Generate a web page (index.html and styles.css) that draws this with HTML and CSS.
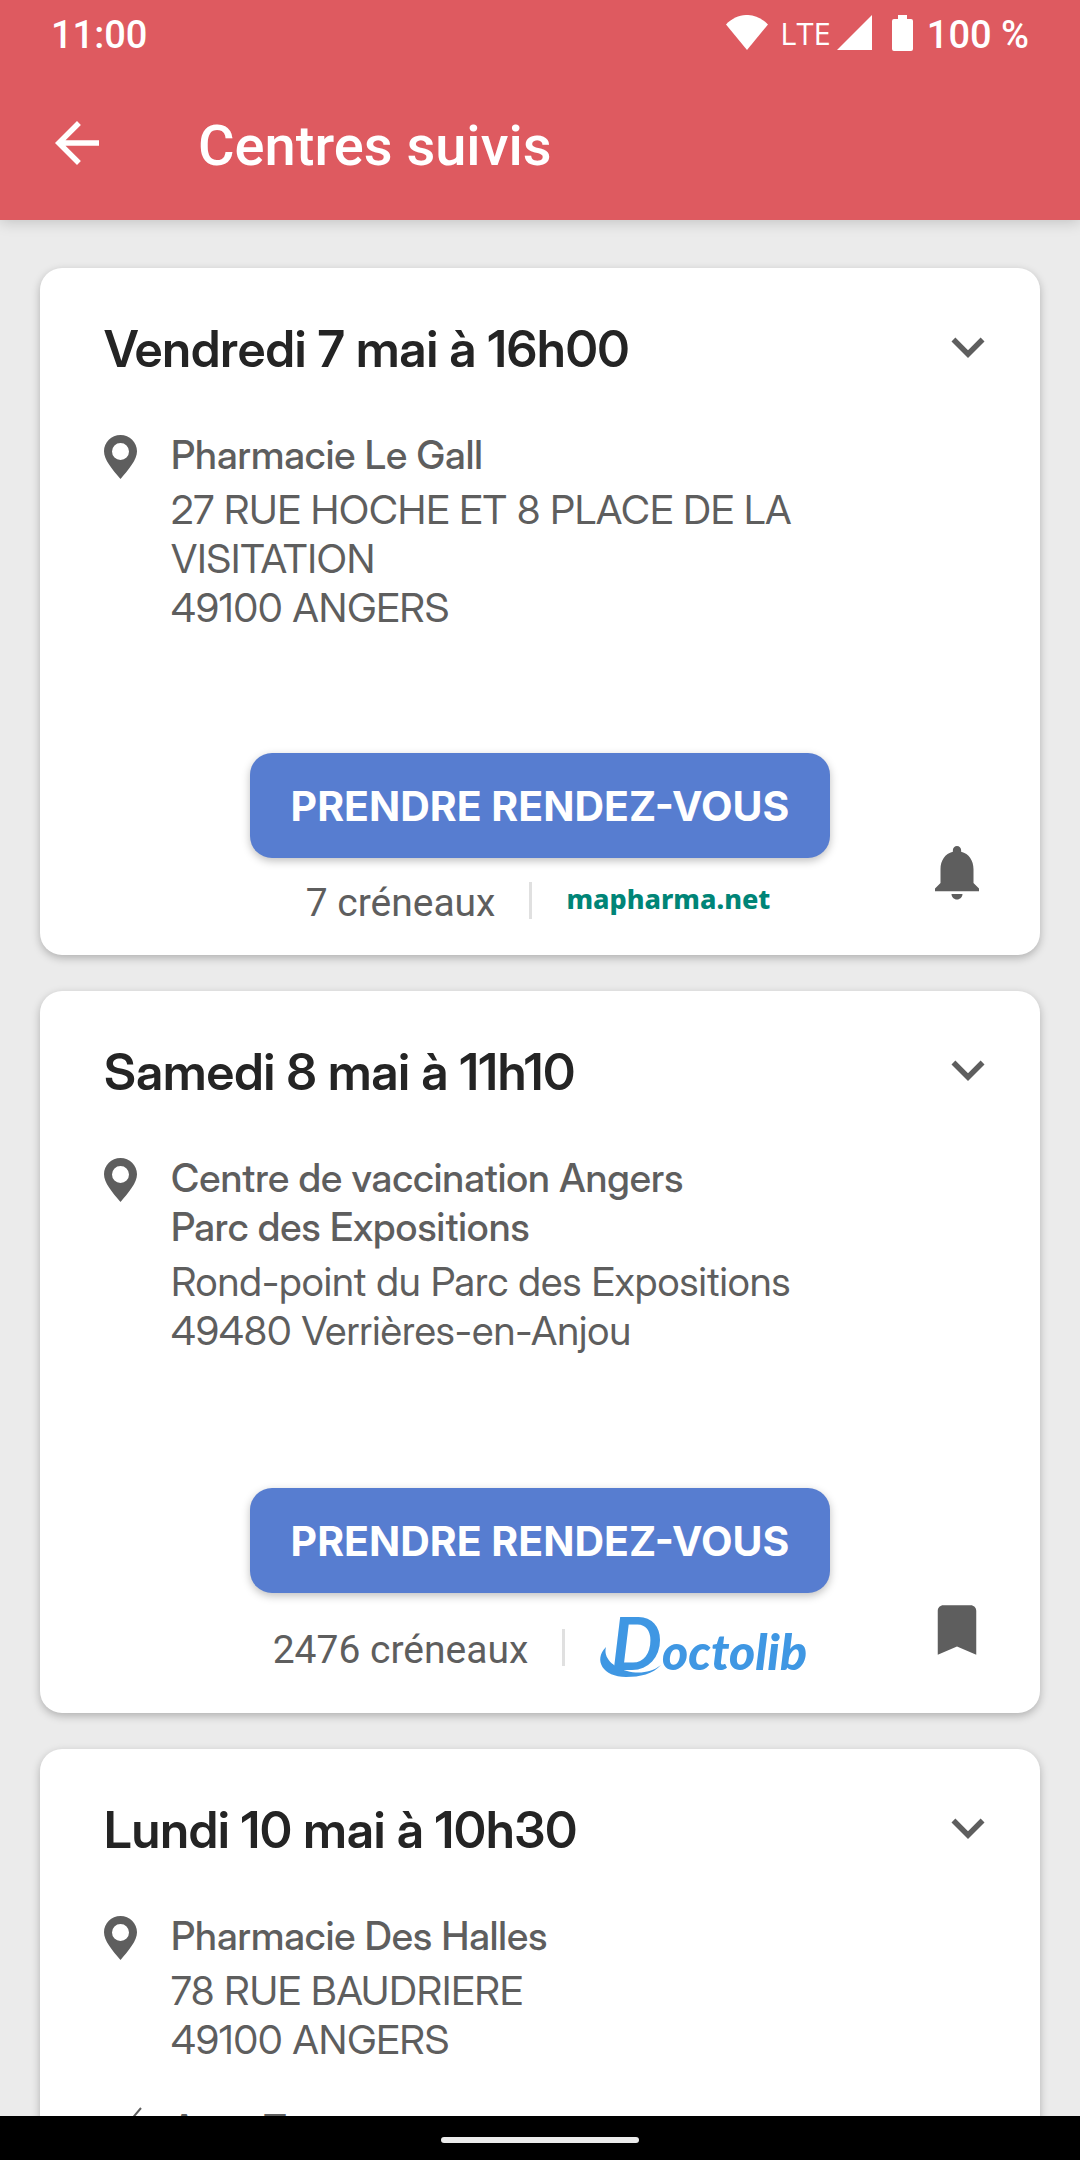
FILE: index.html
```html
<!DOCTYPE html>
<html lang="fr">
<head>
<meta charset="utf-8">
<meta name="viewport" content="width=device-width, initial-scale=1">
<title>Centres suivis</title>
<link rel="stylesheet" href="styles.css">
</head>
<body>
<svg class="sprite" aria-hidden="true">
  <symbol id="chevron" viewBox="0 0 24 24"><path d="M7.41 8.59 12 13.17l4.59-4.58L18 10l-6 6-6-6z"/></symbol>
  <symbol id="pin" viewBox="0 0 33 44"><path fill-rule="evenodd" d="M16.500 0C7.400 0 0 7.200 0 16.300 0 25 8 34 16.500 44 25 34 33 25 33 16.300 33 7.200 25.600 0 16.500 0zm0 8a8.500 8.500 0 1 1 0 17 8.500 8.500 0 0 1 0-17z"/></symbol>
</svg>

<header class="top">
  <div class="status">
    <span class="status-text">11:00</span>
    <div class="status-icons">
      <svg class="wifi" viewBox="0 0 42 35" aria-hidden="true"><path d="M0 9.500C12-3.200 30-3.200 42 9.500L21 35z"/></svg>
      <span class="network">LTE</span>
      <svg class="signal" viewBox="0 0 35 35" aria-hidden="true"><path d="M0 35 35 0v35z"/></svg>
      <svg class="battery" viewBox="0 0 21 36" aria-hidden="true"><path d="M6 0h9v4h4q2 0 2 2v28q0 2-2 2H2q-2 0-2-2V6q0-2 2-2h4z"/></svg>
      <span class="status-text">100 %</span>
    </div>
  </div>
  <div class="appbar">
    <button class="icon-button back" aria-label="Retour"><svg viewBox="0 0 24 24"><path d="M20 11H7.830l5.590-5.590L12 4l-8 8 8 8 1.410-1.410L7.830 13H20z"/></svg></button>
    <h1 class="page-title">Centres suivis</h1>
  </div>
</header>

<main class="list">
  <article class="card">
    <div class="card-head">
      <h2 class="date">Vendredi 7 mai à 16h00</h2>
      <button class="icon-button" aria-label="Détails"><svg><use href="#chevron"/></svg></button>
    </div>
    <div class="place">
      <svg class="pin" aria-hidden="true"><use href="#pin"/></svg>
      <div>
        <h3 class="name">Pharmacie Le Gall</h3>
        <p class="address">27 RUE HOCHE ET 8 PLACE DE LA<br>VISITATION<br>49100 ANGERS</p>
      </div>
    </div>
    <div class="card-foot">
      <div class="booking">
        <button class="book">PRENDRE RENDEZ-VOUS</button>
        <div class="slots">
          <span class="count">7 créneaux</span>
          <span class="divider"></span>
          <span class="mapharma">mapharma.net</span>
        </div>
      </div>
      <button class="icon-button follow" aria-label="Alerte"><svg viewBox="0 0 24 24"><path d="M12 22c1.100 0 2-.9 2-2h-4c0 1.100.89 2 2 2zm6-6v-5c0-3.070-1.640-5.640-4.500-6.320V4c0-.83-.67-1.500-1.500-1.500s-1.500.67-1.500 1.500v.68C7.630 5.360 6 7.920 6 11v5l-2 2v1h16v-1z"/></svg></button>
    </div>
  </article>

  <article class="card">
    <div class="card-head">
      <h2 class="date">Samedi 8 mai à 11h10</h2>
      <button class="icon-button" aria-label="Détails"><svg><use href="#chevron"/></svg></button>
    </div>
    <div class="place">
      <svg class="pin" aria-hidden="true"><use href="#pin"/></svg>
      <div>
        <h3 class="name">Centre de vaccination Angers<br>Parc des Expositions</h3>
        <p class="address">Rond-point du Parc des Expositions<br>49480 Verrières-en-Anjou</p>
      </div>
    </div>
    <div class="card-foot spacious">
      <div class="booking">
        <button class="book">PRENDRE RENDEZ-VOUS</button>
        <div class="slots">
          <span class="count">2476 créneaux</span>
          <span class="divider"></span>
          <svg class="doctolib" viewBox="0 0 204 60" role="img" aria-label="Doctolib">
            <path d="M7 30C-6 43 4 60 27 60c14 0 27-3 35-12-10 8-23 9-34 6C14 50 4 41 7 30z"/>
            <text x="12" y="53"><tspan class="initial">D</tspan><tspan>octolib</tspan></text>
          </svg>
        </div>
      </div>
      <button class="icon-button follow" aria-label="Suivi"><svg viewBox="0 0 24 24"><path d="M17 3H7c-1.100 0-2 .9-2 2v16l7-3 7 3V5c0-1.100-.9-2-2-2z"/></svg></button>
    </div>
  </article>

  <article class="card">
    <div class="card-head">
      <h2 class="date">Lundi 10 mai à 10h30</h2>
      <button class="icon-button" aria-label="Détails"><svg><use href="#chevron"/></svg></button>
    </div>
    <div class="place">
      <svg class="pin" aria-hidden="true"><use href="#pin"/></svg>
      <div>
        <h3 class="name">Pharmacie Des Halles</h3>
        <p class="address">78 RUE BAUDRIERE<br>49100 ANGERS</p>
      </div>
    </div>
    <div class="vaccine">
      <svg class="syringe" viewBox="0 0 40 40" aria-hidden="true"><path d="M37 4 26 17M21 14l12 12M24 17 8 33v5h5l16-16"/></svg>
      <span class="name">AstraZeneca</span>
    </div>
  </article>
</main>

<nav class="system-nav" aria-label="Système"><span class="handle"></span></nav>
</body>
</html>
```
FILE: styles.css
```css
* { box-sizing: border-box; }

body {
  margin: 0;
  height: 100vh;
  display: flex;
  flex-direction: column;
  overflow: hidden;
  background: #ebebeb;
  color: #5e5e5e;
  font-family: "Inter Display", Inter, "Liberation Sans", sans-serif;
}

h1, h2, h3, p { margin: 0; }
svg { display: block; fill: currentColor; }
.sprite { position: absolute; width: 0; height: 0; }

.icon-button {
  flex: none;
  padding: 0;
  border: 0;
  background: none;
  color: inherit;
}
.icon-button svg { width: 66px; height: 66px; }

/* Status bar and title bar */
.top {
  flex: none;
  position: relative;
  background: #de5a60;
  color: #fff;
  box-shadow: 0 2px 14px rgba(0, 0, 0, .18);
}
.status {
  display: flex;
  justify-content: space-between;
  height: 66px;
  padding: 0 51px;
}
.status-text { font: 500 38px/70px Roboto, sans-serif; }
.status-icons { display: flex; align-items: flex-start; }
.status-icons svg { margin-top: 15px; }
.wifi { width: 42px; height: 35px; }
.network { margin: 0 6px 0 12px; font: 31px/66px "Open Sans", sans-serif; }
.signal { width: 35px; height: 35px; }
.battery { width: 21px; height: 36px; margin-right: 14px; margin-left: 20px; }
.appbar {
  display: flex;
  align-items: center;
  gap: 88px;
  height: 154px;
  padding: 0 44px;
}
.page-title { padding-top: 6px; font: 500 56px/72px Roboto, sans-serif; }

/* Cards */
.list {
  flex: 1;
  min-height: 0;
  overflow: hidden;
  padding: 48px 40px 0;
}
.card {
  margin-bottom: 36px;
  border-radius: 22px;
  background: #fff;
  box-shadow: 0 3px 8px rgba(0, 0, 0, .25);
}
.card-head {
  display: flex;
  justify-content: space-between;
  padding: 46px 39px 50px 64px;
}
.date {
  padding-top: 4px;
  color: #242424;
  font-size: 50px;
  font-weight: 600;
  line-height: 62px;
}
.place {
  display: flex;
  gap: 34px;
  padding: 0 64px;
}
.pin { flex: none; width: 33px; height: 44px; margin-top: 5px; }
.name { font-size: 39px; font-weight: 500; line-height: 49px; }
.address { margin-top: 6px; font-size: 40px; line-height: 49px; }

.card-foot {
  display: grid;
  grid-template-columns: 1fr auto 1fr;
  padding: 121px 50px 36px;
}
.spacious { padding-top: 133px; }
.booking { grid-column: 2; }
.book {
  display: block;
  width: 580px;
  height: 105px;
  padding: 0;
  border: 0;
  border-radius: 22px;
  background: #577dd0;
  color: #fff;
  font: 700 41px/48px Inter, sans-serif;
  box-shadow: 0 3px 8px rgba(0, 0, 0, .25);
}
.slots {
  display: flex;
  justify-content: center;
  align-items: center;
  margin-top: 24px;
  padding-right: 4px;
}
.count { height: 37px; font: 39px/42px Roboto, sans-serif; }
.divider {
  width: 3px;
  height: 37px;
  margin: 0 34px;
  background: #e0e0e0;
}
.mapharma {
  height: 37px;
  color: #008577;
  font: 800 27px/34px "Noto Sans", sans-serif;
}
.doctolib { width: 204px; height: 60px; fill: #3f97e3; overflow: visible; }
.doctolib text { font: italic 900 50px Lato, sans-serif; }
.doctolib .initial { font-size: 72px; font-weight: 700; }
.follow { align-self: end; justify-self: end; margin-bottom: 14px; }

.vaccine {
  display: flex;
  gap: 27px;
  padding: 40px 64px;
}
.syringe {
  width: 40px;
  height: 40px;
  fill: none;
  stroke: currentColor;
  stroke-width: 2;
}

/* Gesture bar */
.system-nav {
  flex: none;
  position: relative;
  display: flex;
  align-items: center;
  justify-content: center;
  height: 44px;
  padding-top: 4px;
  background: #000;
}
.handle { width: 198px; height: 6px; border-radius: 3px; background: #ebebeb; }
```
